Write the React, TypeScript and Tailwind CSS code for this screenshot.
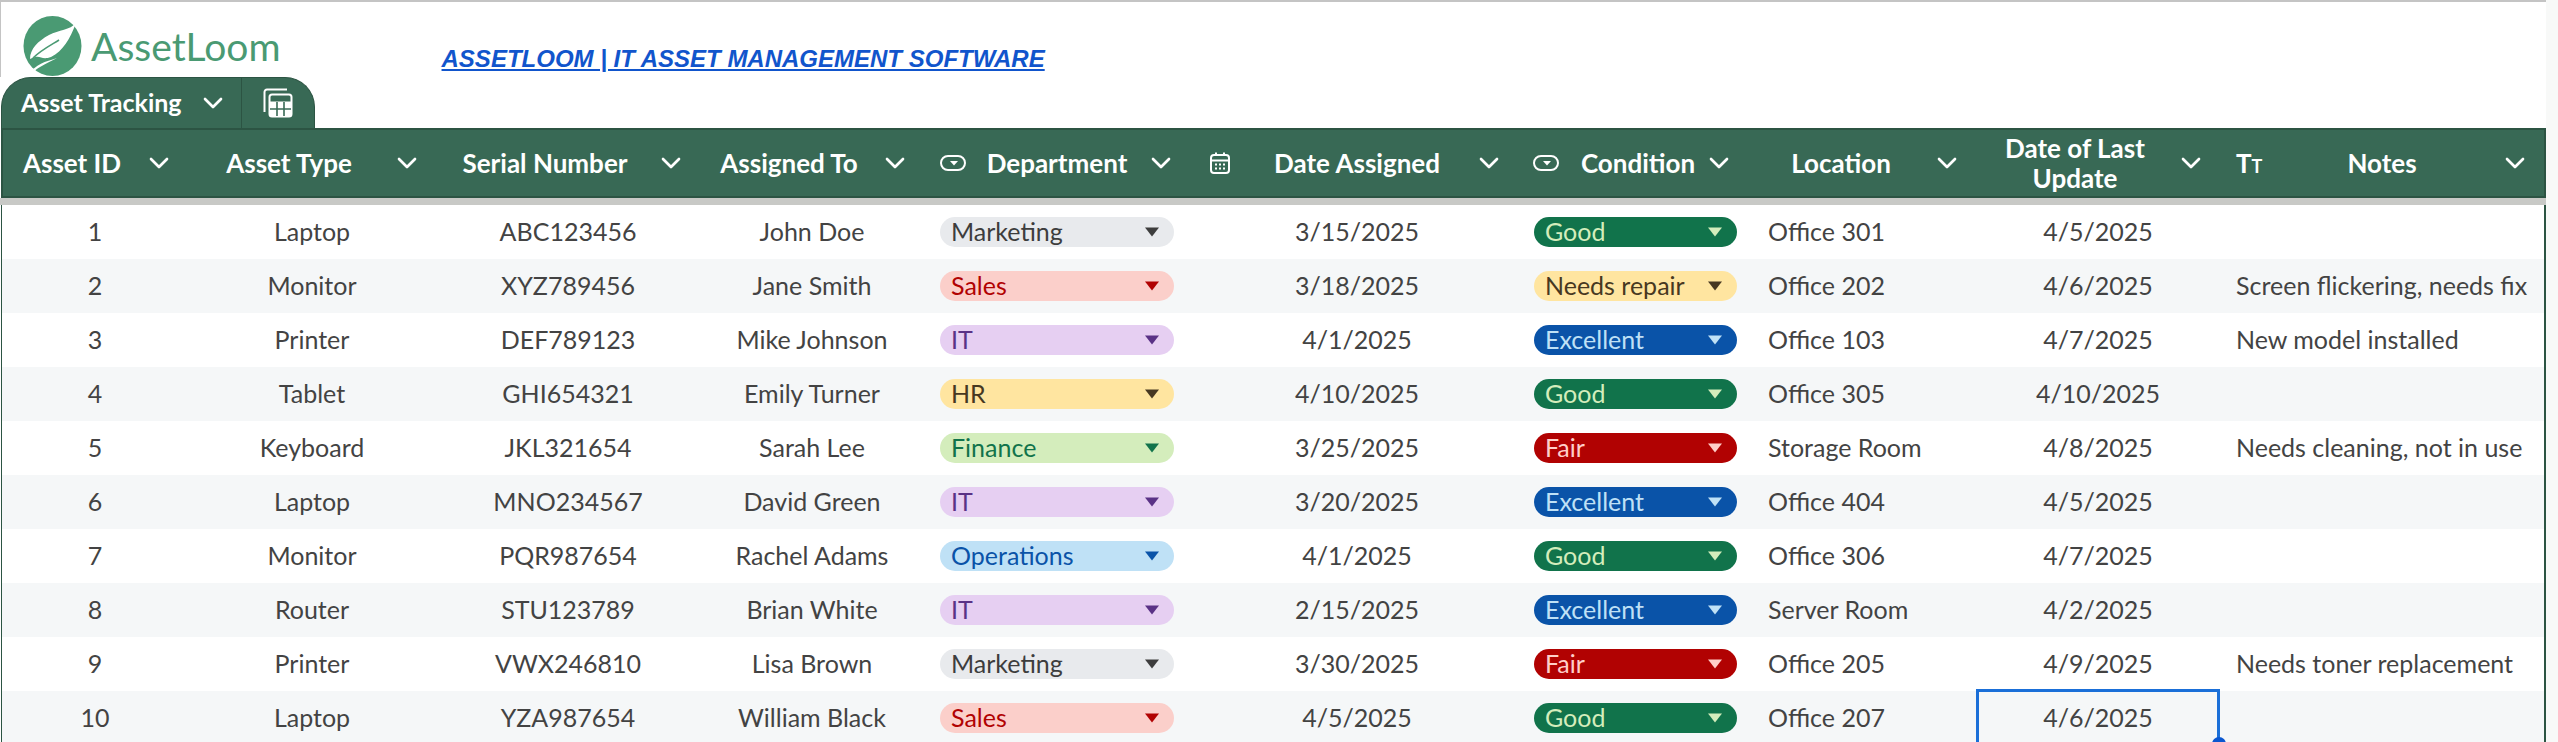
import { ReactNode } from "react";
import { ChevronDown } from "lucide-react";

const FONT = "font-['Lato','Noto_Sans',sans-serif]";

const chips: Record<string, { bg: string; text: string; fill: string }> = {
  Marketing: { bg: "bg-[#e8eaed]", text: "text-[#3d3d3d]", fill: "#3d3d3d" },
  Sales: { bg: "bg-[#fbcfca]", text: "text-[#b10202]", fill: "#b10202" },
  IT: { bg: "bg-[#e6cff2]", text: "text-[#5a3286]", fill: "#5a3286" },
  HR: { bg: "bg-[#ffe5a0]", text: "text-[#473821]", fill: "#473821" },
  Finance: { bg: "bg-[#d4edbc]", text: "text-[#11734b]", fill: "#11734b" },
  Operations: { bg: "bg-[#bfe1f6]", text: "text-[#0a53a8]", fill: "#0a53a8" },
  Good: { bg: "bg-[#11734b]", text: "text-[#d4edbc]", fill: "#d4edbc" },
  "Needs repair": { bg: "bg-[#ffe5a0]", text: "text-[#473821]", fill: "#473821" },
  Excellent: { bg: "bg-[#0a53a8]", text: "text-[#bfe1f6]", fill: "#bfe1f6" },
  Fair: { bg: "bg-[#b10202]", text: "text-[#ffcfc9]", fill: "#ffcfc9" },
};

const rows = [
  ["1", "Laptop", "ABC123456", "John Doe", "Marketing", "3/15/2025", "Good", "Office 301", "4/5/2025", ""],
  ["2", "Monitor", "XYZ789456", "Jane Smith", "Sales", "3/18/2025", "Needs repair", "Office 202", "4/6/2025", "Screen flickering, needs fix"],
  ["3", "Printer", "DEF789123", "Mike Johnson", "IT", "4/1/2025", "Excellent", "Office 103", "4/7/2025", "New model installed"],
  ["4", "Tablet", "GHI654321", "Emily Turner", "HR", "4/10/2025", "Good", "Office 305", "4/10/2025", ""],
  ["5", "Keyboard", "JKL321654", "Sarah Lee", "Finance", "3/25/2025", "Fair", "Storage Room", "4/8/2025", "Needs cleaning, not in use"],
  ["6", "Laptop", "MNO234567", "David Green", "IT", "3/20/2025", "Excellent", "Office 404", "4/5/2025", ""],
  ["7", "Monitor", "PQR987654", "Rachel Adams", "Operations", "4/1/2025", "Good", "Office 306", "4/7/2025", ""],
  ["8", "Router", "STU123789", "Brian White", "IT", "2/15/2025", "Excellent", "Server Room", "4/2/2025", ""],
  ["9", "Printer", "VWX246810", "Lisa Brown", "Marketing", "3/30/2025", "Fair", "Office 205", "4/9/2025", "Needs toner replacement"],
  ["10", "Laptop", "YZA987654", "William Black", "Sales", "4/5/2025", "Good", "Office 207", "4/6/2025", ""],
];

const GRID = "grid grid-cols-[186px_248px_264px_224px_266px_334px_228px_224px_244px_324px]";

function ChipIcon() {
  return (
    <svg width="26" height="16" viewBox="0 0 26 16" fill="none" stroke="white" strokeWidth="2">
      <rect x="1" y="1" width="24" height="14" rx="7" />
      <path d="M10 6h8l-4 4.5z" fill="white" stroke="none" />
    </svg>
  );
}

function CalendarIcon() {
  return (
    <svg width="22" height="24" viewBox="0 0 22 24" fill="none" stroke="white" strokeWidth="2">
      <rect x="2" y="4" width="18" height="18" rx="3" />
      <path d="M2 9.5h18M7 1.5V5M15 1.5V5" />
      <path d="M6 13.5h2M10 13.5h2M14 13.5h2M6 17.5h2M10 17.5h2M14 17.5h2" strokeWidth="2" />
    </svg>
  );
}

function CalcIcon() {
  return (
    <svg width="30" height="30" viewBox="0 0 30 30" fill="none" stroke="white" strokeWidth="2">
      <path d="M1.5 24V4A2.5 2.5 0 0 1 4 1.500h20" />
      <rect x="6.500" y="6.500" width="22" height="22" rx="2.500" />
      <path d="M7 13.500h21v14.500H7z" fill="white" stroke="none" />
      <path d="M7 21h21M14 14v14M21 14v14" stroke="#386955" strokeWidth="1.600" />
    </svg>
  );
}

function Leaf() {
  return (
    <svg width="60" height="62" viewBox="0 0 60 62" className="shrink-0">
      <ellipse cx="29.500" cy="31" rx="29" ry="30" fill="#4a9a73" />
      <path d="M53 8C47 15 36 15 26 20C15 26 7 34 7 44C18 38 17 46 28 42C40 36 47 24 53 8Z" fill="white" />
      <path d="M10 43C18 35 28 30 36 25" stroke="#4a9a73" strokeWidth="1.600" fill="none" />
      <path d="M5 61C13 48 22 47 34 43C22 49 14 53 5 61Z" fill="white" />
    </svg>
  );
}

function Chevron({ shift = "ml-[1px]" }: { shift?: string }) {
  return (
    <div className="flex h-full w-[46px] shrink-0 items-center">
      <ChevronDown size={32} strokeWidth={2} className={shift} />
    </div>
  );
}

function Head({ icon, children, iconPad = "pl-[16px]", shift }: { icon?: ReactNode; children: ReactNode; iconPad?: string; shift?: string }) {
  return (
    <div className="flex h-full items-center">
      <div className={`flex h-full w-[46px] shrink-0 items-center overflow-visible ${iconPad}`}>{icon}</div>
      <div className="flex-1 text-center">{children}</div>
      <Chevron shift={shift} />
    </div>
  );
}

function HeadPlain({ children }: { children: ReactNode }) {
  return (
    <div className="flex h-full items-center">
      <div className="flex-1 text-center leading-[30px]">{children}</div>
      <Chevron />
    </div>
  );
}

function Chip({ label, wide }: { label: string; wide?: boolean }) {
  const c = chips[label];
  return (
    <div className={`flex h-[30px] items-center justify-between rounded-full pl-[11px] pr-[14px] ${wide ? "w-[234px]" : "w-[203px]"} ${c.bg} ${c.text}`}>
      <span>{label}</span>
      <svg width="16" height="10" viewBox="0 0 16 10">
        <path d="M1 0.500h14L8 9.500z" fill={c.fill} />
      </svg>
    </div>
  );
}

export default function App() {
  return (
    <div className={`flex h-[742px] w-[2558px] overflow-hidden bg-[#f8f9f8] text-[25px] text-[#434343] ${FONT}`}>
      <div className="w-[2546px] shrink-0 bg-white">
        <div className="flex h-[77px] items-start border-l border-t-2 border-[#c4c4c4]">
          <div className="flex items-center gap-[8px] pl-[22px] pt-[13px]">
            <Leaf />
            <span className="text-[39px] leading-none text-[#4a9a73]">AssetLoom</span>
          </div>
          <a className="ml-[161px] mt-[45px] font-['Liberation_Sans',sans-serif] text-[24px] font-bold italic leading-none text-[#1155cc] underline">
            ASSETLOOM | IT ASSET MANAGEMENT SOFTWARE
          </a>
        </div>

        <div className="ml-[1px] flex h-[51px] w-[314px] items-center rounded-t-[30px] border-x border-t border-[#2c5443] bg-[#386955] font-bold text-white">
          <div className="flex h-full w-[240px] items-center justify-between border-r border-[#2c5443] pl-[19px] pr-[12px]">
            <span>Asset Tracking</span>
            <ChevronDown size={32} strokeWidth={2} />
          </div>
          <div className="flex flex-1 justify-center">
            <CalcIcon />
          </div>
        </div>

        <div className="ml-[1px] border-2 border-[#2c5443] bg-[#386955] text-[26px] font-bold text-white">
          <div className={`${GRID} h-[66px] -ml-[1px]`}>
            <HeadPlain>Asset ID</HeadPlain>
            <HeadPlain>Asset Type</HeadPlain>
            <HeadPlain>Serial Number</HeadPlain>
            <HeadPlain>Assigned To</HeadPlain>
            <Head icon={<ChipIcon />}>Department</Head>
            <Head icon={<CalendarIcon />} iconPad="pl-[19px]" shift="ml-[-5px]">Date Assigned</Head>
            <Head icon={<ChipIcon />} iconPad="pl-[9px]" shift="ml-[-3px]">Condition</Head>
            <HeadPlain>Location</HeadPlain>
            <HeadPlain>
              Date of Last
              <br />
              Update
            </HeadPlain>
            <Head icon={<span className="whitespace-nowrap text-[26px]">T<span className="text-[18px]">T</span></span>}>Notes</Head>
          </div>
        </div>
        <div className="h-[7px] bg-[#c8c9c6]" />

        <div className="ml-[1px] border-x-2 border-[#2c5443]">
          <div className="-ml-[1px]">
            {rows.map((r, i) => (
              <div key={r[0]} className={`${GRID} h-[54px] items-center ${i % 2 === 1 ? "bg-[#f5f7f8]" : "bg-white"}`}>
                <div className="text-center">{r[0]}</div>
                <div className="text-center">{r[1]}</div>
                <div className="text-center">{r[2]}</div>
                <div className="text-center">{r[3]}</div>
                <div className="pl-[16px]">
                  <Chip label={r[4]} wide />
                </div>
                <div className="text-center">{r[5]}</div>
                <div className="pl-[10px]">
                  <Chip label={r[6]} />
                </div>
                <div className="pl-[16px]">{r[7]}</div>
                <div className="relative flex h-full items-center justify-center">
                  {r[8]}
                  {i === 9 && (
                    <div className="absolute -top-[2px] bottom-0 left-0 right-0 border-[3px] border-[#1a6fd8]">
                      <div className="absolute -bottom-[9px] -right-[9px] h-[14px] w-[14px] rounded-full bg-[#0b57d0]" />
                    </div>
                  )}
                </div>
                <div className="whitespace-nowrap pl-[16px]">{r[9]}</div>
              </div>
            ))}
          </div>
        </div>
      </div>
    </div>
  );
}
